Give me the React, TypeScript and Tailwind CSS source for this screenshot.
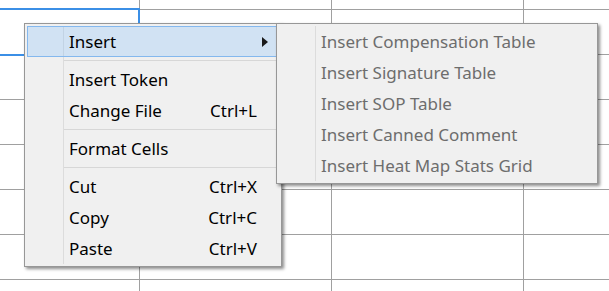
import React from "react";

const font = { fontFamily: '"Noto Sans", "Open Sans", "Liberation Sans", sans-serif' };

const mainItems: (
  | { kind: "item"; label: string; shortcut?: string; active?: boolean; sub?: boolean }
  | { kind: "sep" }
)[] = [
  { kind: "item", label: "Insert", active: true, sub: true },
  { kind: "sep" },
  { kind: "item", label: "Insert Token" },
  { kind: "item", label: "Change File", shortcut: "Ctrl+L" },
  { kind: "sep" },
  { kind: "item", label: "Format Cells" },
  { kind: "sep" },
  { kind: "item", label: "Cut", shortcut: "Ctrl+X" },
  { kind: "item", label: "Copy", shortcut: "Ctrl+C" },
  { kind: "item", label: "Paste", shortcut: "Ctrl+V" },
];

const subItems = [
  "Insert Compensation Table",
  "Insert Signature Table",
  "Insert SOP Table",
  "Insert Canned Comment",
  "Insert Heat Map Stats Grid",
];

function Sheet() {
  const rows = 8;
  const cols = 4;
  const cells = [];
  for (let r = 0; r < rows; r++) {
    for (let c = 0; c < cols; c++) {
      const lastRow = r === rows - 1;
      const lastCol = c === cols - 1;
      cells.push(
        <div
          key={`${r}-${c}`}
          className={`border-[#a0a0a0] ${lastRow ? "" : "border-b"} ${lastCol ? "" : "border-r"}`}
        />
      );
    }
  }
  return (
    <div className="grid h-[291px] w-[609px] grid-cols-[140px_192px_192px_1fr] grid-rows-[10px_repeat(6,45px)_1fr] bg-white">
      {cells}
    </div>
  );
}

function MainMenu() {
  return (
    <div className="absolute left-[24px] top-[23px] w-[258px] border border-[#979797] bg-[#f0f0f0] py-[2px] pl-[2px] pr-[4px] shadow-[2px_2px_3px_rgba(0,0,0,0.45)]">
      <div className="absolute bottom-[2px] left-[38px] top-[2px] w-px bg-[#dcdcdc]" />
      {mainItems.map((it, i) =>
        it.kind === "sep" ? (
          <div key={i} className="flex h-[7px] items-start pl-[37px] pt-[3px]">
            <div className="h-px w-full bg-[#d7d7d7]" />
          </div>
        ) : (
          <div
            key={i}
            className={`relative flex h-[31px] items-center pl-[41px] pr-[19px] text-[17px] text-black ${
              it.active ? "border border-[#84b8ee] bg-[#d1e2f3]" : "border border-transparent"
            }`}
          >
            {it.active && <div className="absolute bottom-0 left-[35px] top-0 w-px bg-[#c2d3e4]" />}
            <span className="flex-1">{it.label}</span>
            {it.shortcut && <span>{it.shortcut}</span>}
            {it.sub && (
              <svg width="6" height="10" viewBox="0 0 6 10" className="mr-[-11px]">
                <path d="M0 0 L6 5 L0 10 Z" fill="#1a1a1a" />
              </svg>
            )}
          </div>
        )
      )}
    </div>
  );
}

function SubMenu() {
  return (
    <div className="absolute left-[276px] top-[23px] w-[322px] border border-[#979797] bg-[#f0f0f0] py-[2px] pl-[2px] pr-[2px] shadow-[2px_2px_3px_rgba(0,0,0,0.45)]">
      <div className="absolute bottom-[2px] left-[38px] top-[2px] w-px bg-[#dcdcdc]" />
      {subItems.map((label) => (
        <div key={label} className="flex h-[31px] items-center pl-[42px] text-[17px] text-[#6d6d6d]">
          {label}
        </div>
      ))}
    </div>
  );
}

export default function App() {
  return (
    <div className="relative h-[291px] w-[609px] overflow-hidden select-none" style={font}>
      <Sheet />
      {/* active cell */}
      <div className="absolute left-[-2px] top-[8px] h-[48px] w-[142px] border-2 border-[#3b8fe6]" />
      <MainMenu />
      <SubMenu />
    </div>
  );
}
